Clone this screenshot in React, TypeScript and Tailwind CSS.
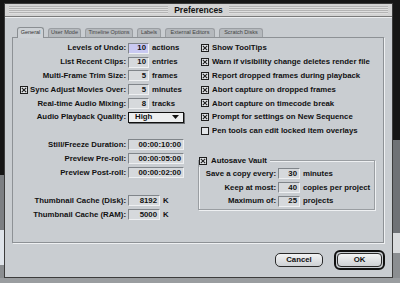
import React from "react";

const Check = ({ checked }: { checked: boolean }) => (
  <svg width="8" height="8" viewBox="0 0 8 8" className="shrink-0">
    <rect x="0.5" y="0.5" width="7" height="7" fill="#e2e5e8" stroke="#1e1e1e" />
    {checked && <path d="M1.8 1.8L6.2 6.2M6.2 1.8L1.8 6.2" stroke="#1e1e1e" strokeWidth="1.1" />}
  </svg>
);

const Field = ({ value, w, focused }: { value: string; w: string; focused?: boolean }) => (
  <div
    className={`${w} h-[11px] shrink-0 flex items-center justify-end pr-[2px] border border-t-[#80858a] border-l-[#80858a] border-b-[#eef0f2] border-r-[#eef0f2] ${
      focused ? "bg-[#c9c9f2]" : "bg-[#d6d9dc]"
    }`}
  >
    {value}
  </div>
);

const LRow = ({ label, children }: { label: React.ReactNode; children: React.ReactNode }) => (
  <div className="h-[13.8px] flex items-center">
    <div className="w-[113px] shrink-0 flex justify-end items-center">{label}</div>
    <div className="ml-[2px] flex items-center">{children}</div>
  </div>
);

const CRow = ({ checked, text }: { checked: boolean; text: string }) => (
  <div className="h-[13.8px] flex items-center gap-[3px] whitespace-nowrap">
    <Check checked={checked} />
    <span>{text}</span>
  </div>
);

const GRow = ({ label, value, unit }: { label: string; value: string; unit: string }) => (
  <div className="h-[13.8px] flex items-center whitespace-nowrap">
    <div className="w-[77px] text-right shrink-0">{label}</div>
    <div className="ml-[2px]">
      <Field value={value} w="w-[22px]" />
    </div>
    <span className="ml-[3px]">{unit}</span>
  </div>
);

const tabs = [
  { t: "General", w: "w-[27px]", sel: true },
  { t: "User Mode", w: "w-[33px]", sel: false },
  { t: "Timeline Options", w: "w-[48px]", sel: false },
  { t: "Labels", w: "w-[24px]", sel: false },
  { t: "External Editors", w: "w-[50px]", sel: false },
  { t: "Scratch Disks", w: "w-[44px]", sel: false },
];

export default function App() {
  return (
    <div className="relative w-[400px] h-[283px] overflow-hidden bg-[#161616] font-['Liberation_Sans',Arial,sans-serif] text-[#111]">
      {/* desktop background pieces */}
      <div className="absolute left-0 top-[175px] w-[4px] h-[55px] bg-[#7c7f83]" />
      <div className="absolute left-0 top-[230px] w-[4px] h-[35px] bg-[#dfe4ea]" />
      <div className="absolute left-0 top-[265px] w-[4px] h-[13px] bg-[#8a8d90]" />
      <div className="absolute right-0 top-[140px] w-[7px] h-[93px] bg-[#6f7276]" />
      <div className="absolute right-0 top-[233px] w-[7px] h-[20px] bg-[#d9dbdd]" />
      <div className="absolute right-0 top-[253px] w-[7px] h-[25px] bg-[#8b8e91]" />
      <div className="absolute left-0 top-[278px] w-[400px] h-[5px] bg-[#9a9da0]" />

      {/* window */}
      <div className="absolute left-[4px] top-[3px] w-[389px] h-[275px] flex flex-col bg-[#c9cdd1] border border-[#3c3c3c]">
        {/* title bar */}
        <div className="h-[13px] shrink-0 flex items-center bg-[#d3d3d3] px-[4px] border-b border-[#7a7a7a]">
          <div className="flex-1 h-[8px] bg-[repeating-linear-gradient(to_bottom,#b4b4b4_0px,#b4b4b4_1px,#dedede_1px,#dedede_2px)]" />
          <div className="px-[6px] text-[8.5px] font-bold leading-none">Preferences</div>
          <div className="flex-1 h-[8px] bg-[repeating-linear-gradient(to_bottom,#b4b4b4_0px,#b4b4b4_1px,#dedede_1px,#dedede_2px)]" />
        </div>

        {/* body */}
        <div className="flex-1 flex flex-col px-[7px] pt-[9px] border-t border-[#eceef0]">
          {/* tabs */}
          <div className="h-[10px] flex items-end gap-[4px] pl-[5px] relative z-10">
            {tabs.map((tb) => (
              <div
                key={tb.t}
                className={`${tb.w} flex items-center justify-center rounded-t-[3px] border border-b-0 text-[5.5px] leading-none whitespace-nowrap ${
                  tb.sel
                    ? "h-[11px] -mb-px bg-[#cdd1d5] border-[#8a8e92] text-[#333]"
                    : "h-[9px] bg-[#b5b9bd] border-[#9a9ea2] text-[#444]"
                }`}
              >
                {tb.t}
              </div>
            ))}
          </div>

          {/* panel */}
          <div className="h-[206px] w-[372px] flex border border-[#8d9195] shadow-[1px_1px_0_#eef0f2] text-[7.8px] font-bold leading-none">
            {/* left column */}
            <div className="w-[185px] shrink-0 pt-[3.4px] flex flex-col whitespace-nowrap">
              <LRow label="Levels of Undo:">
                <Field value="10" w="w-[21px]" focused />
                <span className="ml-[3px]">actions</span>
              </LRow>
              <LRow label="List Recent Clips:">
                <Field value="10" w="w-[21px]" />
                <span className="ml-[3px]">entries</span>
              </LRow>
              <LRow label="Multi-Frame Trim Size:">
                <Field value="5" w="w-[21px]" />
                <span className="ml-[3px]">frames</span>
              </LRow>
              <LRow
                label={
                  <span className="flex items-center gap-[2px]">
                    <Check checked />
                    <span>Sync Adjust Movies Over:</span>
                  </span>
                }
              >
                <Field value="5" w="w-[21px]" />
                <span className="ml-[3px]">minutes</span>
              </LRow>
              <LRow label="Real-time Audio Mixing:">
                <Field value="8" w="w-[21px]" />
                <span className="ml-[3px]">tracks</span>
              </LRow>
              <LRow label="Audio Playback Quality:">
                <div className="w-[56px] h-[11px] flex items-center justify-between pl-[6px] pr-[4px] border border-[#111] bg-[#eceeef] shadow-[1px_1px_0_#6b6e72]">
                  <span>High</span>
                  <svg width="7" height="4" viewBox="0 0 7 4">
                    <path d="M0 0H7L3.5 4Z" fill="#111" />
                  </svg>
                </div>
              </LRow>
              <div className="h-[13.9px]" />
              <LRow label="Still/Freeze Duration:">
                <Field value="00:00:10:00" w="w-[56px]" />
              </LRow>
              <LRow label="Preview Pre-roll:">
                <Field value="00:00:05:00" w="w-[56px]" />
              </LRow>
              <LRow label="Preview Post-roll:">
                <Field value="00:00:02:00" w="w-[56px]" />
              </LRow>
              <div className="h-[14.3px]" />
              <LRow label="Thumbnail Cache (Disk):">
                <Field value="8192" w="w-[32px]" />
                <span className="ml-[3px]">K</span>
              </LRow>
              <LRow label="Thumbnail Cache (RAM):">
                <Field value="5000" w="w-[32px]" />
                <span className="ml-[3px]">K</span>
              </LRow>
            </div>

            {/* right column */}
            <div className="flex-1 flex flex-col pt-[3.4px]">
              <div className="pl-[3px] flex flex-col">
                <CRow checked text="Show ToolTips" />
                <CRow checked text="Warn if visibility change deletes render file" />
                <CRow checked text="Report dropped frames during playback" />
                <CRow checked text="Abort capture on dropped frames" />
                <CRow checked text="Abort capture on timecode break" />
                <CRow checked text="Prompt for settings on New Sequence" />
                <CRow checked={false} text="Pen tools can edit locked item overlays" />
              </div>
              <div className="relative mt-[22.5px] w-[177px] h-[50px] border border-[#9a9ea2] shadow-[inset_1px_1px_0_#eef0f2,1px_1px_0_#eef0f2] pt-[5.4px] flex flex-col">
                <div className="absolute left-0 top-[-7px] h-[13px] flex items-center gap-[4px] pr-[3px] bg-[#c9cdd1] whitespace-nowrap">
                  <Check checked />
                  <span>Autosave Vault</span>
                </div>
                <GRow label="Save a copy every:" value="30" unit="minutes" />
                <GRow label="Keep at most:" value="40" unit="copies per project" />
                <GRow label="Maximum of:" value="25" unit="projects" />
              </div>
            </div>
          </div>

          {/* buttons */}
          <div className="mt-[7px] flex justify-end items-center gap-[11px] pr-[0px] text-[7.8px] font-bold leading-none">
            <button className="w-[48px] h-[14px] rounded-[5px] border border-[#2a2a2a] bg-[linear-gradient(to_bottom,#f2f3f4,#cfd2d5)] flex items-center justify-center">
              Cancel
            </button>
            <div className="w-[51px] h-[20px] rounded-[6px] border-[2px] border-[#111] p-[1px] bg-[#c9cdd1] flex">
              <button className="flex-1 rounded-[4px] border border-[#2a2a2a] bg-[linear-gradient(to_bottom,#f2f3f4,#cfd2d5)] flex items-center justify-center">
                OK
              </button>
            </div>
          </div>
        </div>
      </div>
    </div>
  );
}
